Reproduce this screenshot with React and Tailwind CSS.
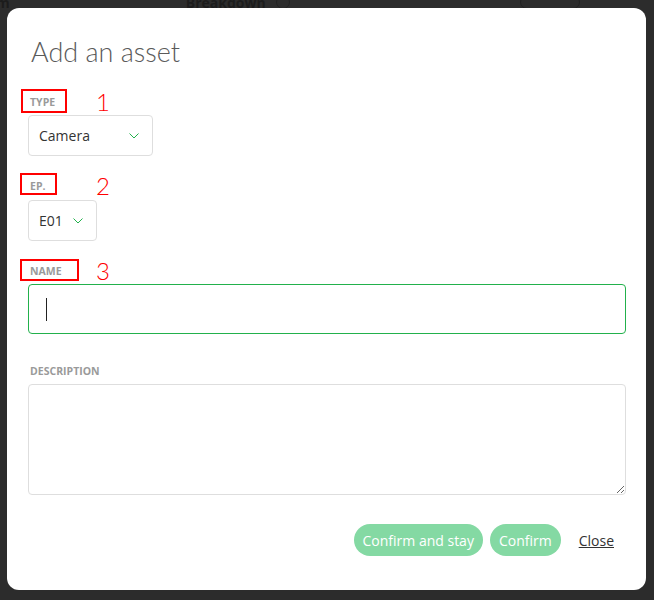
import React from 'react';

const sans = { fontFamily: '"Open Sans", "Noto Sans", sans-serif' };

const Chevron = () => (
    <svg width="10" height="6" viewBox="0 0 10 6" fill="none">
        <path d="M0.5 0.5 L5 5 L9.5 0.5" stroke="#22b14c" strokeWidth="1" />
    </svg>
);

const Label = ({ children, box, num }) => (
    <div className="relative h-[14px] flex items-center">
        <span className="text-[10.5px] font-bold uppercase text-[#9a9a9a] leading-[14px] pl-[2px]">{children}</span>
        {box && <div className={`absolute border-2 border-[#ff0000] ${box}`}></div>}
        {num && (
            <span className="absolute left-[68px] top-[-7px] text-[24px] leading-[28px] font-light text-[#ff0000]" style={{ fontFamily: 'Lato, sans-serif' }}>
                {num}
            </span>
        )}
    </div>
);

const Select = ({ value, width }) => (
    <div className={`${width} h-[41px] border border-[#dedede] rounded-[4px] flex items-center justify-between pl-[10px] pr-[13px] bg-white`}>
        <span className="text-[14px] text-[#333]">{value}</span>
        <Chevron />
    </div>
);

export default function App() {
    return (
        <div className="relative h-[600px] bg-[#2c2c2c] overflow-hidden" style={sans}>
            {/* page behind the modal */}
            <div className="flex items-center h-[16px] -mt-[6px] text-[#1c1c1c] text-[14px] font-bold">
                <span className="ml-[-4px]">m</span>
                <span className="ml-[176px]">Breakdown</span>
                <span className="ml-[10px] w-[14px] h-[14px] rounded-full border border-[#222]"></span>
                <span className="ml-[230px] w-[60px] h-[14px] rounded-full border border-[#222]"></span>
            </div>

            {/* Modal */}
            <div className="absolute left-[7px] top-[8px] w-[639px] h-[582px] bg-white rounded-[12px] pl-[21px] pr-[20px]">
                <h1 className="mt-[27px] text-[27px] leading-[34px] font-light text-[#5a5a5a] pl-[3px]" style={{ fontFamily: 'Lato, sans-serif' }}>
                    Add an asset
                </h1>

                <div className="mt-[26px]">
                    <Label box="left-[-7px] top-[-6px] w-[46px] h-[24px]" num="1">Type</Label>
                </div>
                <div className="mt-[6px]">
                    <Select value="Camera" width="w-[125px]" />
                </div>

                <div className="mt-[23px]">
                    <Label box="left-[-8px] top-[-6px] w-[37px] h-[22px]" num="2">Ep.</Label>
                </div>
                <div className="mt-[7px]">
                    <Select value="E01" width="w-[69px]" />
                </div>

                <div className="mt-[23px]">
                    <Label box="left-[-8px] top-[-5px] w-[59px] h-[22px]" num="3">Name</Label>
                </div>
                <div className="mt-[6px] h-[50px] border border-[#22b14c] rounded-[4px] flex items-center pl-[17px]">
                    <div className="w-px h-[23px] bg-[#222]"></div>
                </div>

                <div className="mt-[30px]">
                    <Label>Description</Label>
                </div>
                <textarea className="mt-[6px] block w-full h-[111px] border border-[#dedede] rounded-[4px] outline-none"></textarea>

                <div className="mt-[29px] flex items-center justify-end pr-[12px]">
                    <button className="h-[32px] px-[9px] rounded-full bg-[#84d9a3] text-white text-[14px]">Confirm and stay</button>
                    <button className="ml-[7px] h-[32px] px-[9px] rounded-full bg-[#84d9a3] text-white text-[14px]">Confirm</button>
                    <a className="ml-[18px] text-[14px] text-[#333] underline">Close</a>
                </div>
            </div>
        </div>
    );
}
